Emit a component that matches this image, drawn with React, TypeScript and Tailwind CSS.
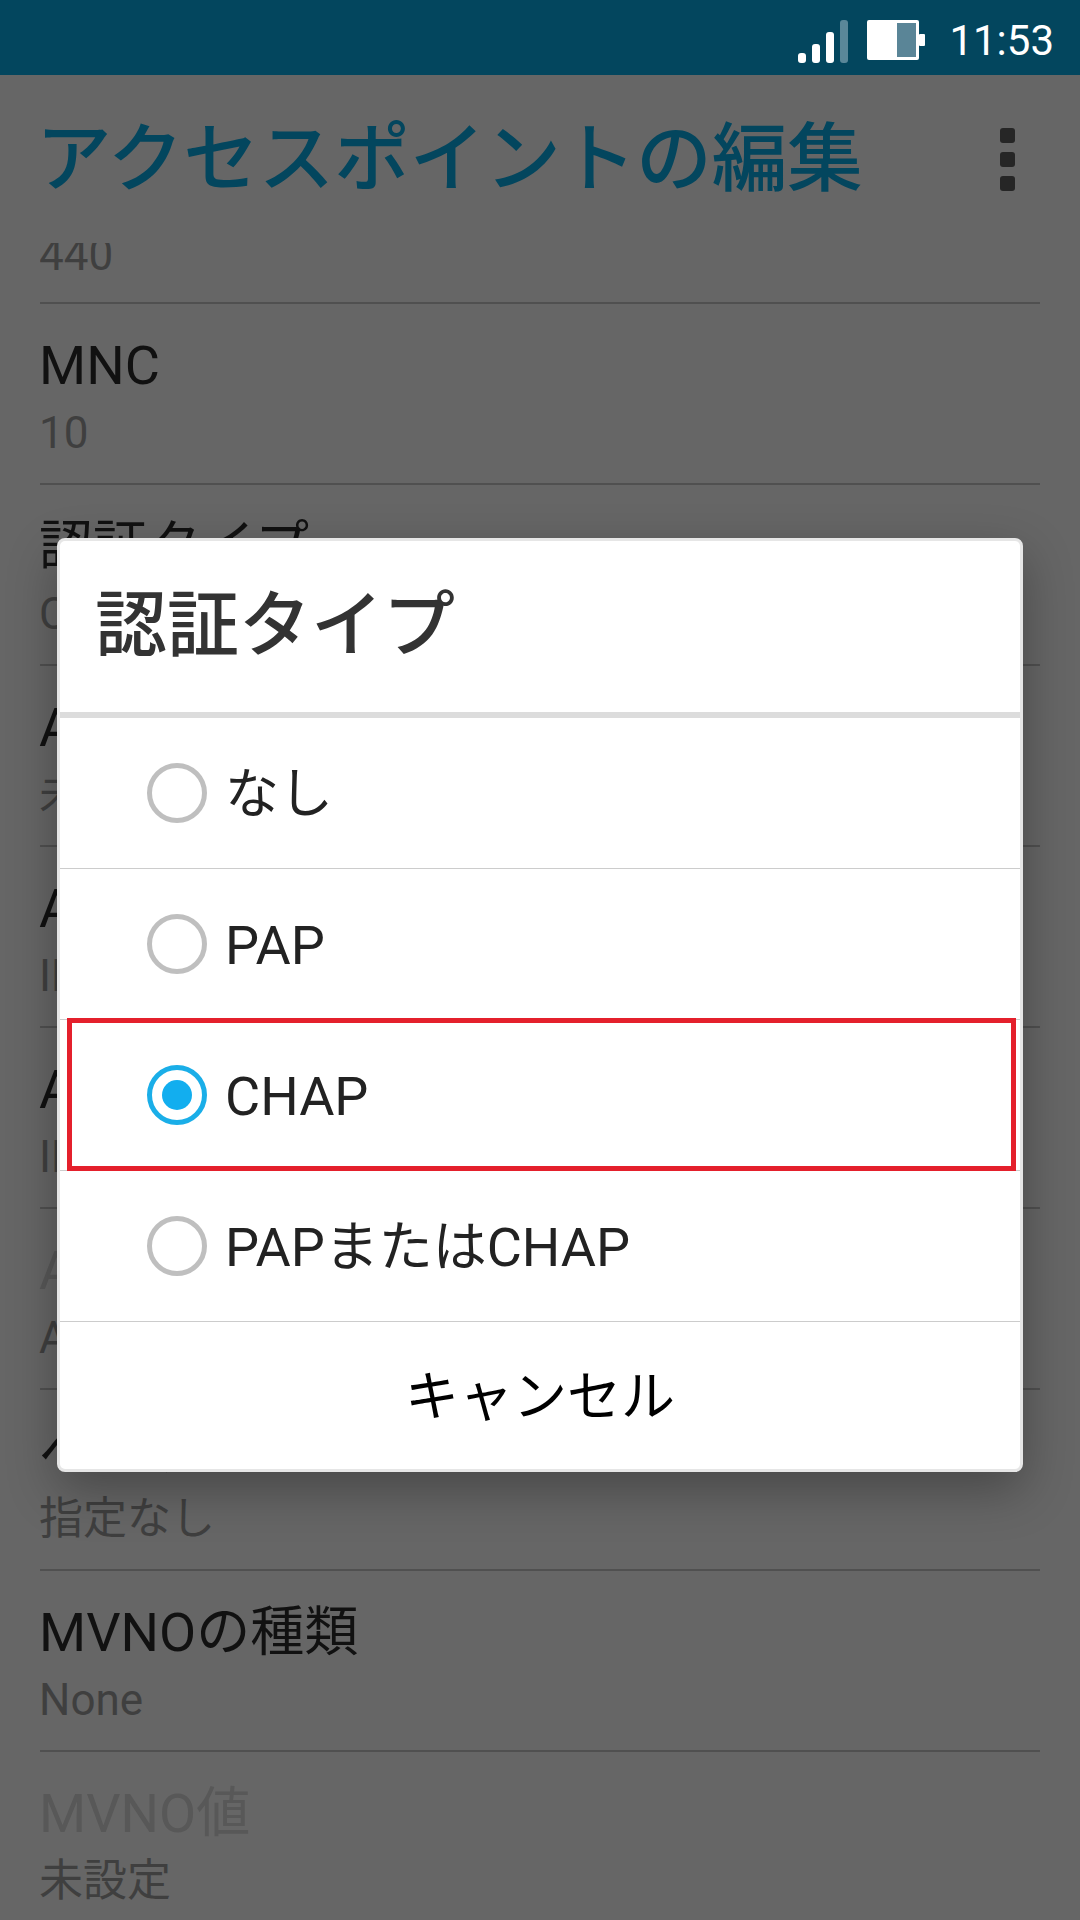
const ROWS = [
  { title: 'MNC', value: '10' },
  { title: '認証タイプ', value: 'CHAP' },
  { title: 'APNタイプ', value: '未設定' },
  { title: 'APNプロトコル', value: 'IPv4/IPv6' },
  { title: 'APNローミングプロトコル', value: 'IPv4/IPv6' },
  { title: 'APNの有効/無効', value: 'APNは有効です', disabled: true },
  { title: 'ベアラー', value: '指定なし' },
  { title: 'MVNOの種類', value: 'None' },
  { title: 'MVNO値', value: '未設定', disabled: true },
]

const OPTIONS = ['なし', 'PAP', 'CHAP', 'PAPまたはCHAP']

function StatusIcons() {
  return (
    <svg width="128" height="44" viewBox="0 0 128 44" className="shrink-0">
      <rect x="0" y="33" width="8" height="10" rx="3" fill="#fff" />
      <rect x="14" y="24" width="8" height="19" rx="3" fill="#fff" />
      <rect x="28" y="12" width="8" height="31" rx="3" fill="#fff" />
      <rect x="42" y="0" width="8" height="43" rx="3" fill="#5a8799" />
      <rect x="69" y="0" width="52" height="40" rx="2" fill="#fff" />
      <rect x="121" y="14" width="6" height="12" rx="1" fill="#fff" />
      <rect x="99" y="3" width="19" height="34" fill="#5a8597" />
    </svg>
  )
}

function Radio({ checked }: { checked: boolean }) {
  if (checked) {
    return (
      <span className="w-[60px] h-[60px] rounded-full border-[5px] border-[#1aaee8] flex items-center justify-center">
        <span className="w-[30px] h-[30px] rounded-full bg-[#12aeef]" />
      </span>
    )
  }
  return <span className="w-[60px] h-[60px] rounded-full border-[5px] border-[#bfbfbf]" />
}

export default function App() {
  return (
    <div
      lang="ja"
      className="relative w-[1080px] h-[1920px] overflow-hidden bg-[#666666] flex flex-col font-[Roboto,'Noto_Sans_CJK_JP',sans-serif]"
    >
      {/* Status bar */}
      <div className="h-[75px] shrink-0 bg-[#03465e] flex items-start justify-end pt-[20px] pr-[26px]">
        <StatusIcons />
        <span className="ml-[23px] -mt-[11px] text-[42px] leading-[64px] text-white">11:53</span>
      </div>

      {/* App bar */}
      <div className="h-[168px] shrink-0 flex items-center justify-between pl-[36px] pr-[65px]">
        <h1 className="text-[75.5px] leading-[90px] font-medium text-[#03465e]">アクセスポイントの編集</h1>
        <div className="flex flex-col gap-[9px]">
          <span className="w-[15px] h-[15px] rounded-[3px] bg-[#262626]" />
          <span className="w-[15px] h-[15px] rounded-[3px] bg-[#262626]" />
          <span className="w-[15px] h-[15px] rounded-[3px] bg-[#262626]" />
        </div>
      </div>

      {/* Settings list, scrolled */}
      <div className="flex-1 min-h-0 overflow-hidden px-[40px]">
        <div className="h-[61px] flex items-end border-b-2 border-[#505050] overflow-hidden">
          <span className="text-[44px] leading-[50px] mb-[22px] -ml-px text-[#3f3f3f]">440</span>
        </div>
        {ROWS.map((row) => (
          <div key={row.title} className="h-[181px] border-b-2 border-[#505050] pt-[30px]">
            <div className={`text-[54px] leading-[64px] -ml-px ${row.disabled ? 'text-[#585858]' : 'text-[#111111]'}`}>
              {row.title}
            </div>
            <div className="mt-[10px] text-[44px] leading-[50px] -ml-px text-[#3f3f3f]">{row.value}</div>
          </div>
        ))}
      </div>

      {/* Dialog */}
      <div className="absolute left-[57px] top-[538px] w-[966px] h-[934px] flex flex-col rounded-[8px] border-[3px] border-[#e6e6e6] bg-white shadow-[0_18px_50px_rgba(0,0,0,0.3)]">
        <div className="h-[171px] shrink-0 flex items-center pl-[35px] pb-[2px] text-[72px] leading-[90px] font-medium text-[#333333]">
          認証タイプ
        </div>
        <div className="h-[6px] shrink-0 bg-[#dcdcdc]" />
        {OPTIONS.map((option) => (
          <div
            key={option}
            className="relative h-[151px] shrink-0 flex items-center pl-[87px] gap-[18px] border-b border-[#cccccc] text-[54px] leading-[64px] text-[#222222]"
          >
            <Radio checked={option === 'CHAP'} />
            <span className="pt-[3px]">{option}</span>
            {option === 'CHAP' && (
              <span className="absolute left-[7px] right-[4px] -top-[2px] h-[153px] border-[5px] border-[#e4202c]" />
            )}
          </div>
        ))}
        <div className="flex-1 flex items-center justify-center pt-[4px] text-[54px] leading-[64px] text-black">キャンセル</div>
      </div>
    </div>
  )
}
